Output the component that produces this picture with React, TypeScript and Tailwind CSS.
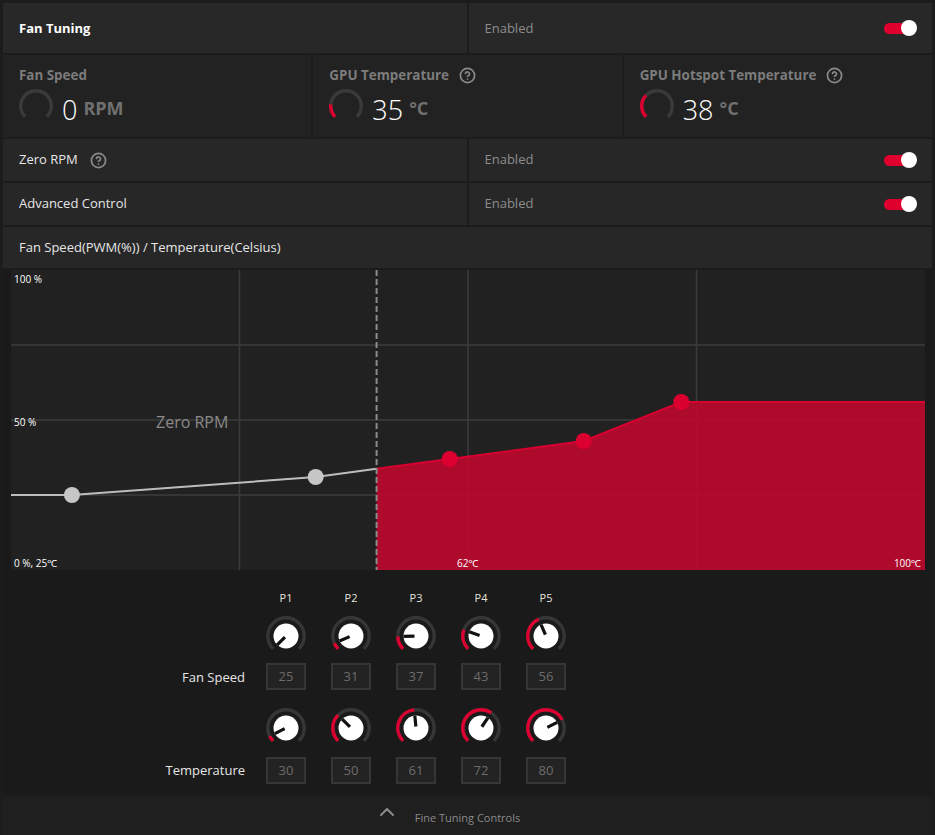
import React from 'react';

// 角度は12時方向から時計回り
function polar(cx: number, cy: number, r: number, deg: number) {
  const a = (deg * Math.PI) / 180;
  return [cx + r * Math.sin(a), cy - r * Math.cos(a)];
}

function arcPath(cx: number, cy: number, r: number, from: number, to: number) {
  const [x1, y1] = polar(cx, cy, r, from);
  const [x2, y2] = polar(cx, cy, r, to);
  const large = to - from > 180 ? 1 : 0;
  return `M ${x1} ${y1} A ${r} ${r} 0 ${large} 1 ${x2} ${y2}`;
}

const START = 225;
const SWEEP = 270;

function HelpIcon({ size = 16 }: { size?: number }) {
  return (
    <svg
      width={size}
      height={size}
      viewBox="0 0 24 24"
      fill="none"
      stroke="currentColor"
      strokeWidth={2.4}
      strokeLinecap="round"
      strokeLinejoin="round"
      className="text-[#8a8a8a]"
    >
      <circle cx="12" cy="12" r="10" />
      <path d="M9.09 9a3 3 0 0 1 5.83 1c0 2-3 3-3 3" />
      <path d="M12 17h.01" />
    </svg>
  );
}

function Toggle() {
  return (
    <div className="relative w-[33px] h-[16px]">
      <div className="absolute left-0 top-[2.5px] w-[28px] h-[11px] rounded-full bg-[#e0002d]" />
      <div className="absolute right-0 top-0 w-[16px] h-[16px] rounded-full bg-white" />
    </div>
  );
}

function StatGauge({ frac }: { frac: number }) {
  const c = 17;
  const r = 15.3;
  return (
    <svg width={34} height={34} className="shrink-0">
      <path d={arcPath(c, c, r, START, START + SWEEP)} stroke="#3a3a3a" strokeWidth={3.4} fill="none" />
      {frac > 0 && (
        <path d={arcPath(c, c, r, START, START + SWEEP * frac)} stroke="#dc0030" strokeWidth={3.4} fill="none" />
      )}
    </svg>
  );
}

function Knob({ value }: { value: number }) {
  const frac = Math.max(0, Math.min(1, (value - 25) / 75));
  const angle = START + SWEEP * frac;
  const [px, py] = polar(20, 20, 12.5, angle);
  const [sx, sy] = polar(20, 20, 1.5, angle);
  return (
    <svg width={40} height={40}>
      <path d={arcPath(20, 20, 18.2, START, START + SWEEP)} stroke="#363636" strokeWidth={3.4} fill="none" />
      {frac > 0.005 && (
        <path d={arcPath(20, 20, 18.2, START, angle)} stroke="#dc0030" strokeWidth={3.4} fill="none" />
      )}
      <circle cx={20} cy={20} r={12.5} fill="#ffffff" />
      <line x1={sx} y1={sy} x2={px} y2={py} stroke="#111111" strokeWidth={3.2} />
    </svg>
  );
}

function Stat({ label, help, value, unit, frac }: { label: string; help?: boolean; value: string; unit: string; frac: number }) {
  return (
    <div className="bg-[#222222] pl-4 pt-[10px]">
      <div className="flex items-center h-[20px]">
        <span className="text-[13.4px] font-bold text-[#7c7c7c]">{label}</span>
        {help && (
          <span className="ml-[10px] flex">
            <HelpIcon size={17} />
          </span>
        )}
      </div>
      <div className="mt-[4px] flex items-center h-[34px]">
        <StatGauge frac={frac} />
        <span className="ml-[9px] mt-[6px] text-[27px] leading-none font-light text-white">{value}</span>
        <span className="ml-[6px] mt-[4px] text-[18px] leading-none font-bold text-[#707070]">{unit}</span>
      </div>
    </div>
  );
}

function SettingRow({ label, help }: { label: string; help?: boolean }) {
  return (
    <div className="grid grid-cols-2 gap-[2px] h-[42px]">
      <div className="bg-[#272727] pl-4 flex items-center">
        <span className="text-[13px] text-[#e6e6e6]">{label}</span>
        {help && (
          <span className="ml-[12px] flex">
            <HelpIcon size={17} />
          </span>
        )}
      </div>
      <div className="bg-[#272727] pl-4 pr-[15px] flex items-center justify-between">
        <span className="text-[13px] text-[#8c8c8c]">Enabled</span>
        <Toggle />
      </div>
    </div>
  );
}

const W = 914;
const H = 300;
const points = [
  { t: 30, s: 25 },
  { t: 50, s: 31 },
  { t: 61, s: 37 },
  { t: 72, s: 43 },
  { t: 80, s: 56 },
];
const xOf = (t: number) => ((t - 25) / 75) * W;
const yOf = (s: number) => H * (1 - s / 100);

function FanChart() {
  const zeroT = 55;
  const zx = xOf(zeroT);
  const zy = yOf(31 + ((zeroT - 50) / 11) * 6);
  const p = points.map((pt) => ({ x: xOf(pt.t), y: yOf(pt.s) }));
  const grayLine = `M 0 ${p[0].y} L ${p[0].x} ${p[0].y} L ${p[1].x} ${p[1].y} L ${zx} ${zy}`;
  const redLine = `M ${zx} ${zy} L ${p[2].x} ${p[2].y} L ${p[3].x} ${p[3].y} L ${p[4].x} ${p[4].y} L ${W} ${p[4].y}`;
  const fill = `${redLine} L ${W} ${H} L ${zx} ${H} Z`;

  return (
    <div className="relative w-[914px] h-[300px] bg-[#212121]">
      <svg width={W} height={H} className="block">
        {[W / 4, W / 2, (W * 3) / 4].map((x) => (
          <line key={x} x1={x} y1={0} x2={x} y2={H} stroke="#3c3c3c" strokeWidth={1.5} />
        ))}
        {[75, 150, 225].map((y) => (
          <line key={y} x1={0} y1={y} x2={W} y2={y} stroke="#3c3c3c" strokeWidth={1.5} />
        ))}
        <path d={fill} fill="#c1072d" fillOpacity={0.88} />
        <path d={redLine} stroke="#d8002f" strokeWidth={2} fill="none" />
        <path d={grayLine} stroke="#bdbdbd" strokeWidth={2} fill="none" />
        <line x1={zx} y1={0} x2={zx} y2={H} stroke="#8a8a8a" strokeWidth={2} strokeDasharray="6 3" />
        {p.map((pt, i) => (
          <circle key={i} cx={pt.x} cy={pt.y} r={8} fill={i < 2 ? '#c6c6c6' : '#dc0030'} />
        ))}
      </svg>
      <div className="absolute left-[3px] top-[2px] text-[10px] leading-[14px] text-white">100 %</div>
      <div className="absolute left-[3px] top-[145px] text-[10px] leading-[14px] text-white">50 %</div>
      <div className="absolute left-[145px] top-[140px] text-[16px] leading-[24px] text-[#8a8a8a]">Zero RPM</div>
      <div className="absolute left-[3px] top-[286px] text-[10px] leading-[14px] text-white">0 %, 25℃</div>
      <div className="absolute left-[446px] top-[286px] text-[10px] leading-[14px] text-white">62℃</div>
      <div className="absolute right-[4px] top-[286px] text-[10px] leading-[14px] text-white">100℃</div>
    </div>
  );
}

export default function App() {
  const fanSpeeds = [25, 31, 37, 43, 56];
  const temps = [30, 50, 61, 72, 80];

  return (
    <div className="w-[935px] h-[835px] overflow-hidden bg-[#1c1c1c] pt-[3px] px-[3px] flex flex-col gap-[2px] font-['Open_Sans','Noto_Sans',sans-serif]">
      {/* ヘッダー */}
      <div className="grid grid-cols-2 gap-[2px] h-[50px] shrink-0">
        <div className="bg-[#282828] pl-4 flex items-center">
          <span className="mt-[1px] text-[13px] font-bold text-white">Fan Tuning</span>
        </div>
        <div className="bg-[#282828] pl-4 pr-[15px] flex items-center justify-between">
          <span className="mt-[1px] text-[13px] text-[#8c8c8c]">Enabled</span>
          <Toggle />
        </div>
      </div>

      {/* 計測値 */}
      <div className="grid grid-cols-3 gap-[2px] h-[82px] shrink-0">
        <Stat label="Fan Speed" value="0" unit="RPM" frac={0} />
        <Stat label="GPU Temperature" help value="35" unit="°C" frac={0.19} />
        <Stat label="GPU Hotspot Temperature" help value="38" unit="°C" frac={0.33} />
      </div>

      <SettingRow label="Zero RPM" help />
      <SettingRow label="Advanced Control" />

      <div className="h-[41px] shrink-0 bg-[#272727] pl-4 flex items-center">
        <span className="text-[13px] text-[#e6e6e6]">Fan Speed(PWM(%)) / Temperature(Celsius)</span>
      </div>

      {/* グラフとノブ */}
      <div className="h-[525px] shrink-0 bg-[#1a1a1a] flex flex-col">
        <div className="pl-[8px]">
          <FanChart />
        </div>

        <div className="mt-[21px] flex items-center h-[14px]">
          <div className="w-[242px]" />
          <div className="ml-[21px] flex gap-[25px]">
            {['P1', 'P2', 'P3', 'P4', 'P5'].map((p) => (
              <div key={p} className="w-[40px] text-center text-[11px] leading-[14px] text-[#e4e2da]">
                {p}
              </div>
            ))}
          </div>
        </div>

        <div className="mt-[11px] flex items-center">
          <div className="w-[242px]" />
          <div className="ml-[21px] flex gap-[25px]">
            {fanSpeeds.map((v) => (
              <Knob key={v} value={v} />
            ))}
          </div>
        </div>

        <div className="mt-[7px] flex items-center">
          <div className="w-[242px] mt-[3px] text-right text-[13px] text-[#e6e6e6]">Fan Speed</div>
          <div className="ml-[21px] flex gap-[25px]">
            {fanSpeeds.map((v) => (
              <div key={v} className="w-[40px] h-[27px] border-2 border-[#363636] bg-[#232323] flex items-center justify-center text-[13px] text-[#6c6c6c]">
                {v}
              </div>
            ))}
          </div>
        </div>

        <div className="mt-[18px] flex items-center">
          <div className="w-[242px]" />
          <div className="ml-[21px] flex gap-[25px]">
            {temps.map((v) => (
              <Knob key={v} value={v} />
            ))}
          </div>
        </div>

        <div className="mt-[9px] flex items-center">
          <div className="w-[242px] text-right text-[13px] text-[#e6e6e6]">Temperature</div>
          <div className="ml-[21px] flex gap-[25px]">
            {temps.map((v) => (
              <div key={v} className="w-[40px] h-[27px] border-2 border-[#363636] bg-[#232323] flex items-center justify-center text-[13px] text-[#6c6c6c]">
                {v}
              </div>
            ))}
          </div>
        </div>
      </div>

      {/* 下部バー */}
      <div className="flex-1 bg-[#1f1f1f] flex items-center justify-center">
        <div className="relative">
          <svg
            width={14}
            height={8}
            viewBox="0 0 14 8"
            fill="none"
            stroke="#8a8a8a"
            strokeWidth={2}
            strokeLinecap="round"
            strokeLinejoin="round"
            className="absolute right-full mr-[21px] top-[4px]"
          >
            <path d="M1 7 L7 1 L13 7" />
          </svg>
          <span className="text-[11px] text-[#8a8a8a]">Fine Tuning Controls</span>
        </div>
      </div>
    </div>
  );
}
